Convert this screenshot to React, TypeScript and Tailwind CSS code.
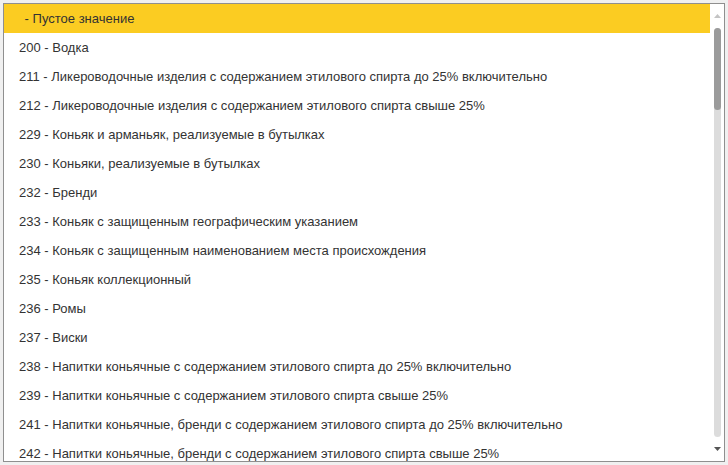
const items = [
  "\u00a0- Пустое значение",
  "200 - Водка",
  "211 - Ликероводочные изделия с содержанием этилового спирта до 25% включительно",
  "212 - Ликероводочные изделия с содержанием этилового спирта свыше 25%",
  "229 - Коньяк и арманьяк, реализуемые в бутылках",
  "230 - Коньяки, реализуемые в бутылках",
  "232 - Бренди",
  "233 - Коньяк с защищенным географическим указанием",
  "234 - Коньяк с защищенным наименованием места происхождения",
  "235 - Коньяк коллекционный",
  "236 - Ромы",
  "237 - Виски",
  "238 - Напитки коньячные с содержанием этилового спирта до 25% включительно",
  "239 - Напитки коньячные с содержанием этилового спирта свыше 25%",
  "241 - Напитки коньячные, бренди с содержанием этилового спирта до 25% включительно",
  "242 - Напитки коньячные, бренди с содержанием этилового спирта свыше 25%",
]

export default function App() {
  return (
    <div className="w-[728px] h-[465px] bg-[#f0f0f0] p-[3px] font-['Liberation_Sans',Arial,sans-serif]">
      <div className="flex h-full border border-[#8f8f8f] bg-white">
        <div className="flex-1 overflow-hidden">
          {items.map((item, i) => (
            <div
              key={i}
              className={`h-[29px] flex items-center text-[13px] text-[#333] whitespace-nowrap ${i === 0 ? "bg-[#fbcc22] pl-[17px]" : "pl-[15px]"}`}
            >
              {item}
            </div>
          ))}
        </div>
        <div className="w-[14px] flex flex-col items-center">
          <div className="h-[24px] flex items-center justify-center pl-[1px]">
            <svg width="7" height="4" viewBox="0 0 7 4"><path d="M0 4 L3.5 0 L7 4 Z" fill="#c4c4c4" /></svg>
          </div>
          <div className="flex-1 w-[7px] ml-[1px] rounded-full bg-[#dcdcdc] flex flex-col">
            <div className="h-[82px] rounded-full bg-[#9b9b9b]" />
          </div>
          <div className="h-[24px] flex items-center justify-center pl-[1px]">
            <svg width="7" height="4" viewBox="0 0 7 4"><path d="M0 0 L7 0 L3.5 4 Z" fill="#555" /></svg>
          </div>
        </div>
      </div>
    </div>
  )
}
